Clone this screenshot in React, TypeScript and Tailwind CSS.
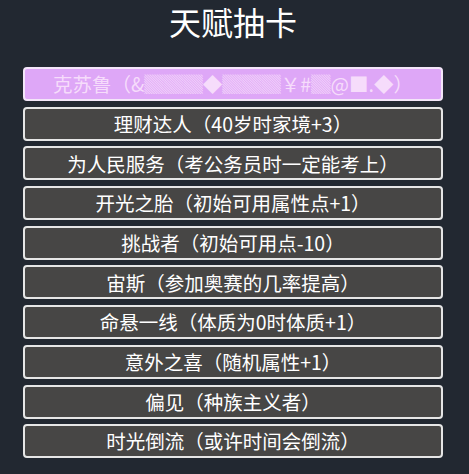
const talents = [
  { name: '克苏鲁（&▓▓▓◆▓▓▓￥#▓@■.◆）', special: true },
  { name: '理财达人（40岁时家境+3）' },
  { name: '为人民服务（考公务员时一定能考上）' },
  { name: '开光之胎（初始可用属性点+1）' },
  { name: '挑战者（初始可用点-10）' },
  { name: '宙斯（参加奥赛的几率提高）' },
  { name: '命悬一线（体质为0时体质+1）' },
  { name: '意外之喜（随机属性+1）' },
  { name: '偏见（种族主义者）' },
  { name: '时光倒流（或许时间会倒流）' },
]

export default function App() {
  return (
    <div
      className="min-h-[474px] w-full bg-[#222831] text-white"
      style={{ fontFamily: '"Noto Sans CJK SC", "Noto Sans", sans-serif' }}
    >
      <div className="ml-[23px] w-[420px]">
        <h1 className="flex h-[67px] items-start justify-center pt-[4px] text-[32px] leading-[34px] font-normal">
          天赋抽卡
        </h1>
        <ul className="flex flex-col gap-[5.7px]">
          {talents.map((t) => (
            <li
              key={t.name}
              className={`flex h-[34px] items-center justify-center rounded-[4px] border-2 text-[19.5px] leading-none ${
                t.special
                  ? 'border-[#f3e6f8] bg-[#dea7f7] text-[#f6dcfb]'
                  : 'border-[#e6e6e6] bg-[#474645] text-white'
              }`}
            >
              {t.name}
            </li>
          ))}
        </ul>
      </div>
    </div>
  )
}
